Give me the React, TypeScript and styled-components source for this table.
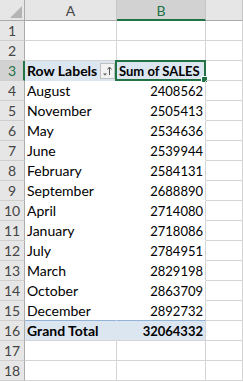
import React from 'react'
import styled, { createGlobalStyle, css } from 'styled-components'

const GlobalStyle = createGlobalStyle`
  html, body {
    margin: 0;
    padding: 0;
    background: #ffffff;
    overflow: hidden;
  }
  body {
    font-family: Lato, "Liberation Sans", sans-serif;
  }
`

const GREEN = '#217346'
const GRID = '#d4d4d4'
const HEAD_LINE = '#ababab'
const PIVOT_BLUE = '#dce6f1'

const Sheet = styled.div`
  display: grid;
  grid-template-columns: 25px 92px 89px 1fr;
  grid-template-rows: 21px;
  grid-auto-rows: 20px;
  width: 243px;
  font-size: 14px;
  color: #000;
`

const Corner = styled.div`
  position: relative;
  background: #e6e6e6;
  border-right: 1px solid ${HEAD_LINE};
  border-bottom: 1px solid ${HEAD_LINE};
  &::after {
    content: '';
    position: absolute;
    right: 2px;
    bottom: 2px;
    width: 0;
    height: 0;
    border-left: 12px solid transparent;
    border-bottom: 12px solid #b4b4b4;
  }
`

const ColHeader = styled.div<{ selected?: boolean }>`
  display: flex;
  align-items: center;
  justify-content: center;
  background: #e6e6e6;
  color: #444;
  border-right: 1px solid #c6c6c6;
  border-bottom: 1px solid ${HEAD_LINE};
  ${p =>
    p.selected &&
    css`
      background: #d2d2d2;
      color: ${GREEN};
      border-bottom: 2px solid ${GREEN};
      padding-top: 1px;
    `}
`

const RowHeader = styled.div<{ selected?: boolean }>`
  display: flex;
  align-items: center;
  justify-content: center;
  background: #e6e6e6;
  color: #444;
  border-right: 1px solid ${HEAD_LINE};
  border-bottom: 1px solid #cfcfcf;
  ${p =>
    p.selected &&
    css`
      background: #d2d2d2;
      color: ${GREEN};
      border-right: 2px solid ${GREEN};
      padding-left: 1px;
    `}
`

type Kind = 'plain' | 'head' | 'body' | 'lastBody' | 'total'

const Cell = styled.div<{ kind?: Kind; right?: boolean; colB?: boolean }>`
  position: relative;
  display: flex;
  align-items: center;
  justify-content: ${p => (p.right ? 'flex-end' : 'flex-start')};
  padding: 0 2px 0 2px;
  white-space: nowrap;
  overflow: visible;
  font-size: ${p => (p.right ? '13px' : '14px')};
  border-right: 1px solid ${GRID};
  border-bottom: 1px solid ${GRID};
  ${p =>
    p.kind === 'head' &&
    css`
      background: ${PIVOT_BLUE};
      font-weight: 700;
      border-bottom-color: ${PIVOT_BLUE};
      border-right-color: ${p.colB ? GRID : PIVOT_BLUE};
      justify-content: space-between;
    `}
  ${p =>
    p.kind === 'body' &&
    css`
      border-bottom-color: #fff;
      border-right-color: ${p.colB ? GRID : '#fff'};
    `}
  ${p =>
    p.kind === 'lastBody' &&
    css`
      border-bottom-color: #95b3d7;
      border-right-color: ${p.colB ? GRID : '#fff'};
    `}
  ${p =>
    p.kind === 'total' &&
    css`
      background: ${PIVOT_BLUE};
      font-weight: 700;
      border-right-color: ${p.colB ? GRID : PIVOT_BLUE};
    `}
`

const HeadText = styled.span<{ tight?: boolean }>`
  font-size: ${p => (p.tight ? '13px' : '14px')};
`

const Selection = styled.div`
  position: absolute;
  left: -2px;
  top: -1px;
  right: -1px;
  bottom: -1px;
  border: 2px solid ${GREEN};
  pointer-events: none;
  &::after {
    content: '';
    position: absolute;
    right: -4px;
    bottom: -4px;
    width: 5px;
    height: 5px;
    background: ${GREEN};
    border: 1px solid #fff;
  }
`

const FilterButton = styled.div`
  width: 13px;
  height: 14px;
  margin-right: -1px;
  margin-top: 1px;
  background: #f2f2f2;
  border: 1px solid #c0c0c0;
  display: flex;
  align-items: center;
  justify-content: center;
`

const FilterIcon = () => (
  <svg width="11" height="12" viewBox="0 0 11 12">
    <path d="M1 8.5h4l-2 2z" fill="#555" />
    <path d="M7.5 10V2.5" stroke="#555" strokeWidth="1" />
    <path d="M5.5 4.5l2-2.5 2 2.5" stroke="#555" strokeWidth="1" fill="none" />
  </svg>
)

const data: [string, number][] = [
  ['August', 2408562],
  ['November', 2505413],
  ['May', 2534636],
  ['June', 2539944],
  ['February', 2584131],
  ['September', 2688890],
  ['April', 2714080],
  ['January', 2718086],
  ['July', 2784951],
  ['March', 2829198],
  ['October', 2863709],
  ['December', 2892732],
]

export default function App() {
  const total = data.reduce((s, d) => s + d[1], 0)
  return (
    <>
      <GlobalStyle />
      <Sheet>
        <Corner />
        <ColHeader>A</ColHeader>
        <ColHeader selected>B</ColHeader>
        <ColHeader />

        {[1, 2].map(n => (
          <React.Fragment key={n}>
            <RowHeader>{n}</RowHeader>
            <Cell />
            <Cell />
            <Cell />
          </React.Fragment>
        ))}

        <RowHeader selected>3</RowHeader>
        <Cell kind="head">
          <HeadText>Row Labels</HeadText>
          <FilterButton>
            <FilterIcon />
          </FilterButton>
        </Cell>
        <Cell kind="head" colB>
          <HeadText tight>Sum of SALES</HeadText>
          <Selection />
        </Cell>
        <Cell />

        {data.map(([month, value], i) => {
          const kind: Kind = i === data.length - 1 ? 'lastBody' : 'body'
          return (
            <React.Fragment key={month}>
              <RowHeader>{i + 4}</RowHeader>
              <Cell kind={kind}>{month}</Cell>
              <Cell kind={kind} colB right>
                {value}
              </Cell>
              <Cell />
            </React.Fragment>
          )
        })}

        <RowHeader>16</RowHeader>
        <Cell kind="total">Grand Total</Cell>
        <Cell kind="total" colB right>
          {total}
        </Cell>
        <Cell />

        {[17, 18].map(n => (
          <React.Fragment key={n}>
            <RowHeader>{n}</RowHeader>
            <Cell />
            <Cell />
            <Cell />
          </React.Fragment>
        ))}
      </Sheet>
    </>
  )
}
